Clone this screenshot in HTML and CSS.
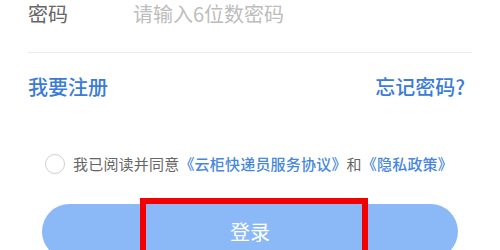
FILE: index.html
```html
<!DOCTYPE html>
<html lang="zh-CN">
<head>
<meta charset="utf-8">
<link rel="stylesheet" href="styles.css">
</head>
<body>
<div class="page">
  <div class="field">
    <span class="label">密码</span>
    <span class="placeholder">请输入6位数密码</span>
  </div>
  <div class="links">
    <a class="link">我要注册</a>
    <a class="link">忘记密码?</a>
  </div>
  <div class="agree">
    <span class="radio"></span>
    <span class="agree-text">我已阅读并同意<span class="blue">《云柜快递员服务协议》</span>和<span class="blue">《隐私政策》</span></span>
  </div>
  <div class="btn-wrap">
    <div class="btn">登录</div>
  </div>
  <div class="highlight"></div>
</div>
</body>
</html>
```

FILE: styles.css
```css
html, body {
  margin: 0;
  padding: 0;
  background: #fff;
}
body {
  font-family: "Noto Sans CJK SC", "Noto Sans", sans-serif;
  width: 500px;
  height: 250px;
  overflow: hidden;
}
.page {
  position: relative;
  width: 500px;
  height: 250px;
  overflow: hidden;
}
.field {
  display: flex;
  align-items: flex-start;
  margin: -1px 28px 0;
  height: 54px;
  border-bottom: 1px solid #ebebeb;
  font-size: 20px;
  line-height: 29px;
  box-sizing: border-box;
}
.label {
  width: 105px;
  color: #666;
}
.placeholder {
  color: #bdbdbd;
}
.links {
  display: flex;
  justify-content: space-between;
  padding: 19px 35px 0 28px;
  font-size: 20px;
  line-height: 29px;
}
.link {
  color: #3a7cd6;
  font-weight: 500;
}
.agree {
  display: flex;
  align-items: center;
  padding: 0 0 0 45px;
  margin-top: 52px;
  height: 22px;
}
.radio {
  width: 20px;
  height: 20px;
  box-sizing: border-box;
  border: 1.5px solid #cfcfcf;
  border-radius: 50%;
  margin-right: 8px;
}
.agree-text {
  font-size: 15px;
  line-height: 22px;
  letter-spacing: 0.2px;
  color: #666;
}
.blue {
  color: #4787de;
  font-weight: 500;
}
.btn-wrap {
  padding: 0 42px;
  margin-top: 29px;
}
.btn {
  height: 55px;
  border-radius: 28px;
  background: #8bb9f7;
  color: #fff;
  font-size: 20px;
  display: flex;
  align-items: center;
  justify-content: center;
}
.highlight {
  position: absolute;
  left: 140px;
  top: 198px;
  width: 228px;
  height: 70px;
  box-sizing: border-box;
  border: 6px solid #f40000;
}
```
